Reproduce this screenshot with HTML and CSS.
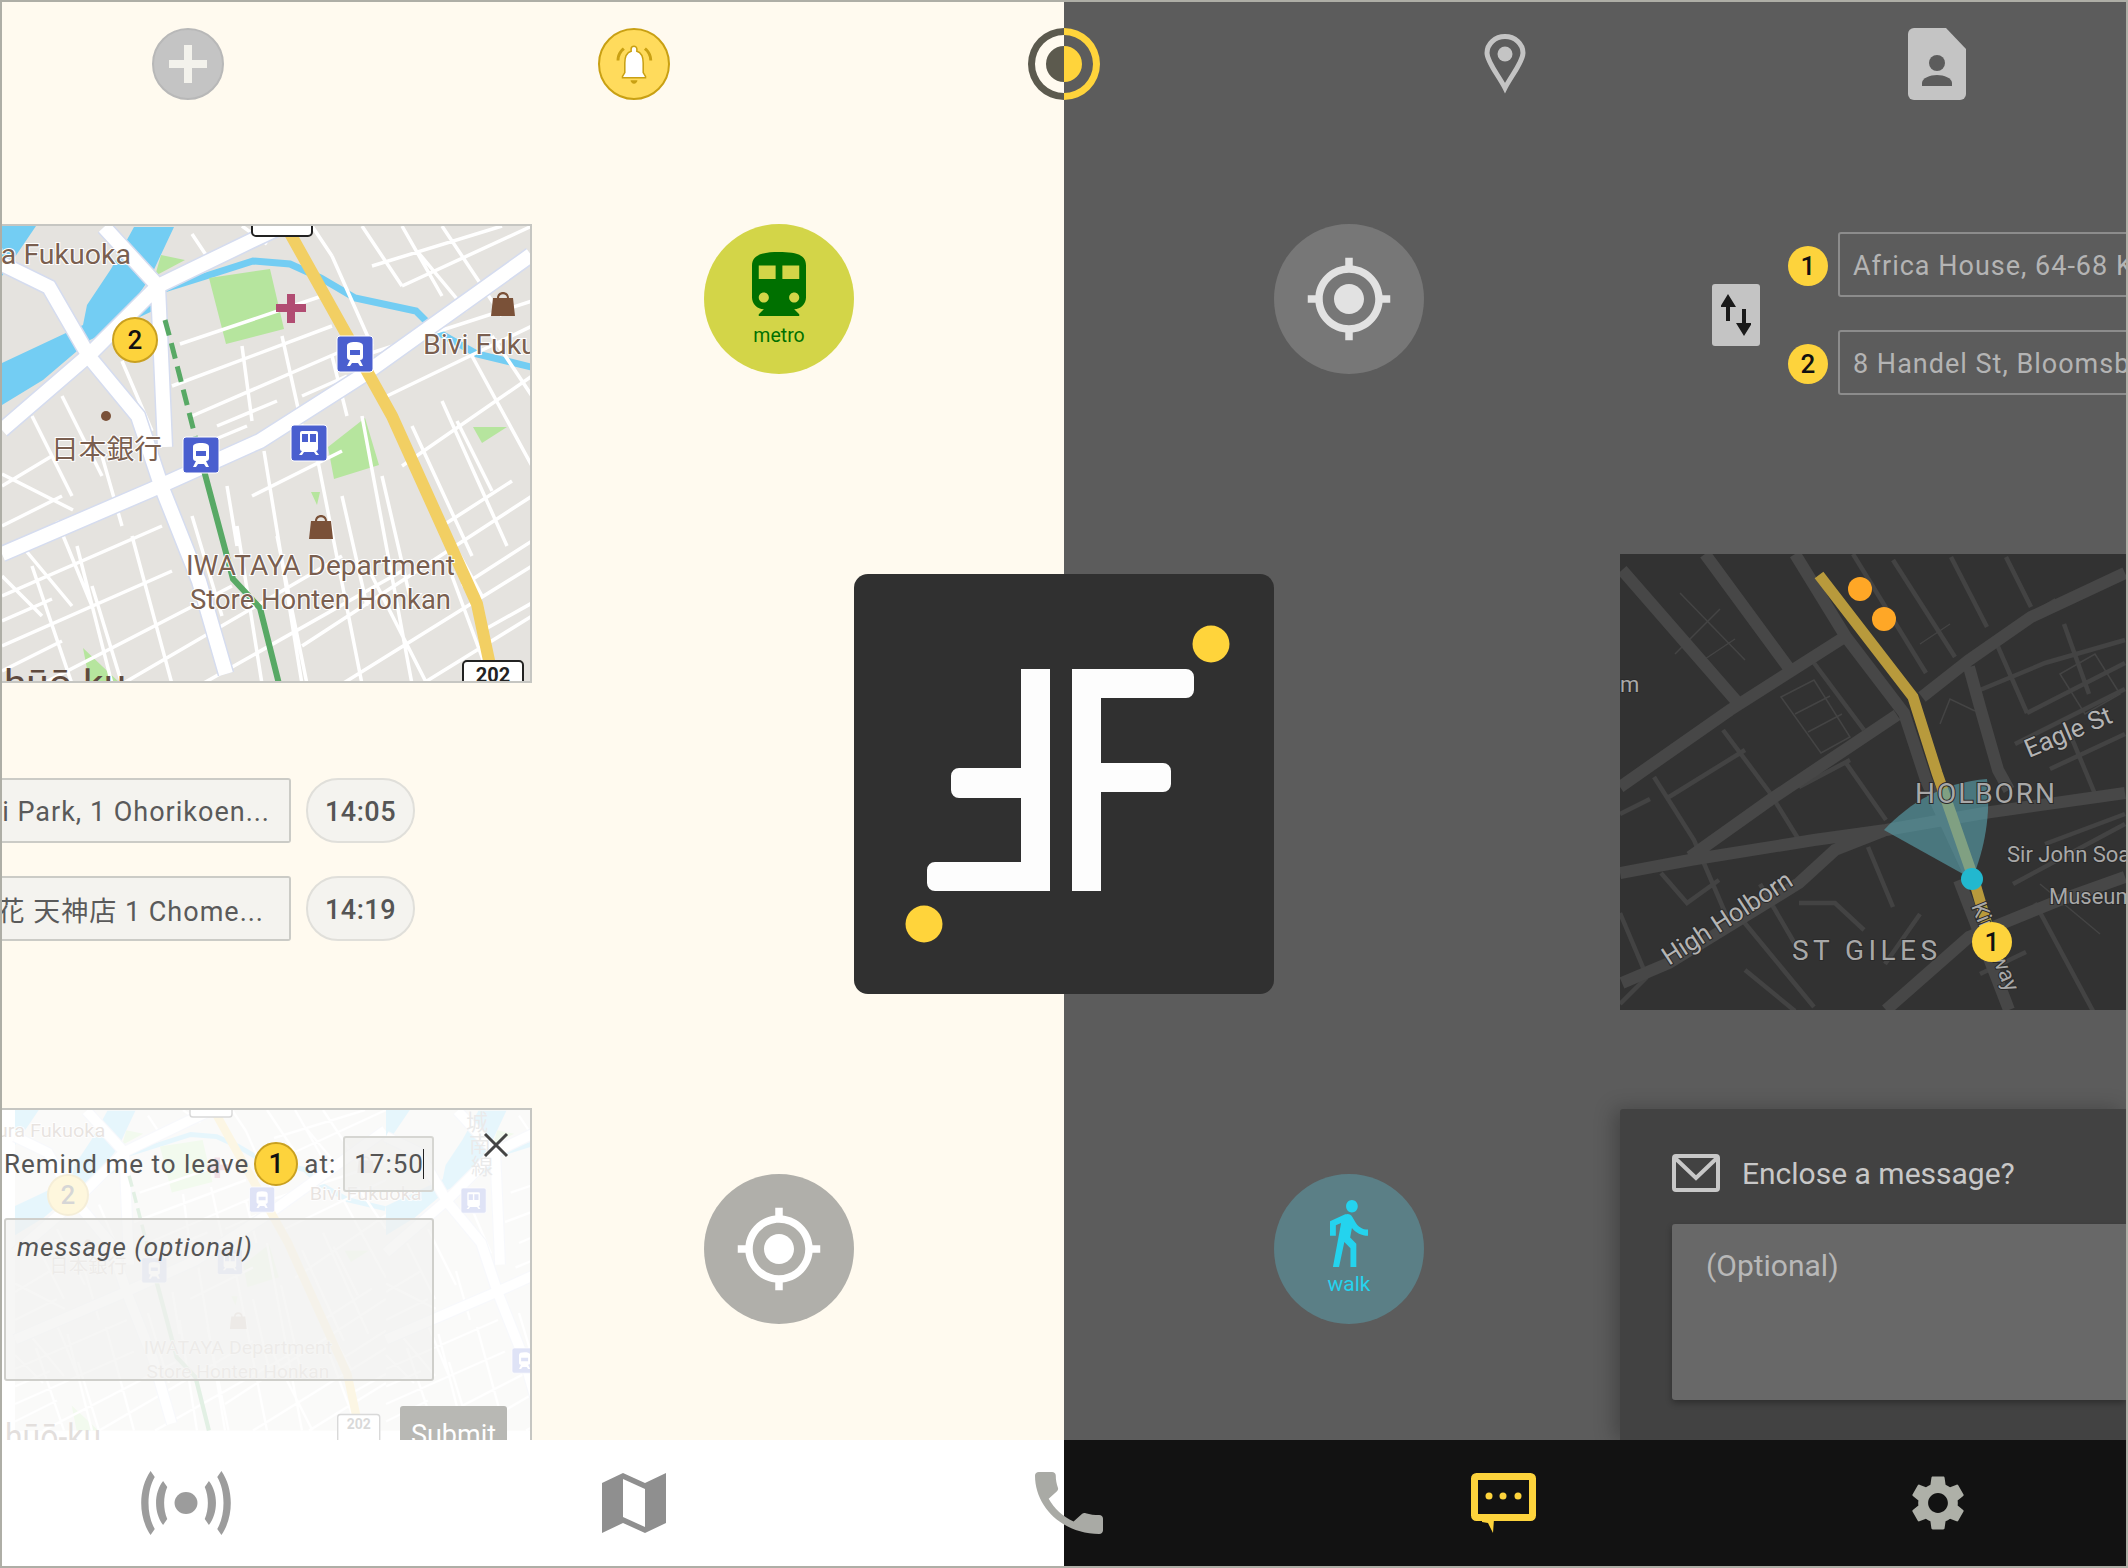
FILE: index.html
```html
<!DOCTYPE html>
<html lang="en">

<head>
  <meta charset="UTF-8">
  <meta name="viewport" content="width=device-width, initial-scale=1.0">
  <title>Route planner</title>
  <link rel="stylesheet" href="styles.css">
</head>

<body>
  <div class="app">

    <!-- top icons -->
    <div class="topbar">
      <div class="nav-plus">
        <svg class="plus-glyph" viewBox="0 0 38 38"><path d="M15 0h8v15h15v8H23v15h-8V23H0v-8h15z" /></svg>
      </div>
      <div class="nav-bell">
        <svg class="bell-glyph" viewBox="0 0 24 24">
          <path class="bell-arc" d="M7.2 4.6 6.2 3.4C4 5 2.9 7.6 2.9 10.2h1.5c0-2.3 1-4.3 2.8-5.6zM20 10.2h1.5c0-2.6-1.200-5.200-3.300-6.800l-1 1.200c1.800 1.300 2.800 3.300 2.800 5.600z" />
          <path class="bell-body" d="M16.800 11.500c0-3-1-5.400-3.300-6.100V4.200c0-.8-.7-1.500-1.500-1.500s-1.500.7-1.500 1.500v1.200c-2.300.7-3.300 3.100-3.300 6.100v5L6 18.500v.7h12v-.7l-1.200-2z" />
          <path class="bell-arc" d="M10.200 20.500h3.600c0 .8-.8 1.800-1.800 1.800s-1.800-1-1.800-1.800z" />
        </svg>
      </div>
      <svg class="nav-split" viewBox="0 0 72 72">
        <path class="split-a" d="M36 0a36 36 0 0 0 0 72v-7a29 29 0 0 1 0-58zM36 18a18 18 0 0 0 0 36z" />
        <path class="split-b" d="M36 0a36 36 0 0 1 0 72v-7a29 29 0 0 0 0-58zM36 18a18 18 0 0 1 0 36z" />
      </svg>
      <svg class="nav-pin" viewBox="0 0 42 60">
        <path class="pin-line" d="M21 54C15 42 3 28 3 19a18 16.500 0 0 1 36 0c0 9-12 23-18 35z" />
        <circle class="pin-dot" cx="21" cy="20" r="7.500" />
      </svg>
      <svg class="nav-doc" viewBox="0 0 58 72">
        <path class="doc-sheet" d="M6 0h32l20 21v45a6 6 0 0 1-6 6H6a6 6 0 0 1-6-6V6a6 6 0 0 1 6-6z" />
        <circle class="doc-person" cx="29" cy="35" r="8" />
        <path class="doc-person" d="M14 58v-3c0-5 8-8 15-8s15 3 15 8v3z" />
      </svg>
    </div>

    <div class="stage">

      <div class="col-left">
        <div class="map-frame">
          <svg class="fk-map" viewBox="0 0 530 458">
            <g id="fk-base">
              <rect width="530" height="458" fill="#e5e3df" />
              <path class="water" d="M132 1h40l-24 51-16 23 21-2 2 10-67 31-47 40-41 25v-42l81-38 4-20 24-36zM0 0h34L0 50z" />
              <path class="canal" d="M156 65l48-15 47-15 37 3 31 14 34 20 61 13 20 20 41 23 54 13" />
              <path class="park" d="M207 52l61-9 14 60-58 15zM159 29l24 5-30 16zM363 192l14 47-45 14-6-32zM471 201h34l-25 16zM81 422l38 36H88zM309 266h9l-3 13z" />
              <path class="streets" d="M75 320l35 138M130 310l40 148M262 225l38 233M310 205l50 253M360 190l50 268M410 200l60 130M440 175l65 145M470 130l60 110M0 370l160-70M0 420l170-75M40 458l190-98M120 458l220-128M200 458l200-113M300 420l230-150M340 458l190-118M420 458l110-68M400 240l130-90M385 170l145-70M178 118l142-48M190 190l150-65M170 160l160-60M330 30l40 90M360 0l40 60M400 0l40 70M440 0l60 90M370 40L500 0M400 60L530 0M330 130l15 60M240 120l10 75M280 110l20 90M360 130l170-55M0 260l50-30M30 190l40 80M60 170l40 80M0 300l60-30M100 230l20 70M0 248l71 36M20 320l50 60M0 350l40 40M225 260l10 60M190 290l30 100M420 260l60 110M90 360l30 98M450 350l40 108M30 340l40 118M55 295l35 85M0 395l50-22M0 445l60-30M235 300l25 158M275 310l30 148M340 270l25 110M380 250l30 130M440 300l70-45M460 360l70-45M480 405l50-28M215 200l60-25M300 170l45-20M185 225l60-25M250 270l90-45M365 340l60 118M490 110l40 60M415 25l50 60M310 0l20 30M120 135l30 70M455 195l35 70M240 0l25 18M190 8l20 30" />
              <g class="roads-edge">
                <path d="M0 328l149-64 109-49 102-65L529 29M0 38l47 23 41 71 48 58 24 72 37 93 27 93M0 204l88-76 68-68 95-46 30-14M102 1l54 59 7 161" />
              </g>
              <g class="roads">
                <path d="M0 328l149-64 109-49 102-65L529 29M0 38l47 23 41 71 48 58 24 72 37 93 27 93M0 204l88-76 68-68 95-46 30-14M102 1l54 59 7 161" />
              </g>
              <path class="highway" d="M284 0l106 190 85 188 17 80" />
            </g>
            <g id="fk-pois">
              <path class="rail-dash" d="M163 94l6 22 31 121" />
              <path class="rail" d="M200 237l31 116 27 29 19 76" />
              <rect class="shield" x="250" y="-12" width="60" height="22" rx="4" />
              <rect class="shield" x="461" y="435" width="60" height="40" rx="4" />
              <text class="shield-text" x="491" y="456" text-anchor="middle">202</text>
              <g class="transit" transform="translate(335 110)">
                <rect width="36" height="36" rx="3" />
                <path d="M18 6c-5 0-8 1-8 4v11c0 2 1 3 3 3l-3 6h3l2-3h6l2 3h3l-3-6c2 0 3-1 3-3V10c0-3-3-4-8-4zm-5 8h10v5H13z" />
              </g>
              <g class="transit" transform="translate(289 199)">
                <rect width="36" height="36" rx="3" />
                <path d="M11 6h14a2 2 0 0 1 2 2v16a2 2 0 0 1-2 2l3 4h-3l-2-3h-10l-2 3H8l3-4a2 2 0 0 1-2-2V8a2 2 0 0 1 2-2zm0 3v8h6V9zm8 0v8h6V9z" />
              </g>
              <g class="transit" transform="translate(181 211)">
                <rect width="36" height="36" rx="3" />
                <path d="M18 6c-5 0-8 1-8 4v11c0 2 1 3 3 3l-3 6h3l2-3h6l2 3h3l-3-6c2 0 3-1 3-3V10c0-3-3-4-8-4zm-5 8h10v5H13z" />
              </g>
              <path class="bag" d="M491 72h20l2 18h-24zM495 72c0-8 12-8 12 0h-2c0-5-8-5-8 0z" />
              <path class="bag" d="M309 295h20l2 18h-24zM313 295c0-8 12-8 12 0h-2c0-5-8-5-8 0z" />
              <path class="clinic" d="M285 68h8v10h11v8h-11v11h-8V86h-11v-8h11z" />
              <circle class="poi-dot" cx="104" cy="190" r="5" />
              <text class="map-label" x="-26" y="38" textLength="155" lengthAdjust="spacingAndGlyphs">ura Fukuoka</text>
              <text class="map-label" x="421" y="128" textLength="160" lengthAdjust="spacingAndGlyphs">Bivi Fukuoka</text>
              <text class="map-label map-cjk" x="49" y="233" textLength="111" lengthAdjust="spacingAndGlyphs">日本銀行</text>
              <text class="map-label" x="184" y="349" textLength="269" lengthAdjust="spacingAndGlyphs">IWATAYA Department</text>
              <text class="map-label" x="188" y="383" textLength="261" lengthAdjust="spacingAndGlyphs">Store Honten Honkan</text>
            </g>
            <text class="map-ward" x="2" y="470" textLength="122" lengthAdjust="spacingAndGlyphs">hūō-ku</text>
            <circle class="pin-mark" cx="133" cy="114" r="22" />
            <text class="pin-num" x="133" y="123" text-anchor="middle">2</text>
          </svg>
        </div>

        <div class="stop-rows">
          <div class="stop-row">
            <div class="stop-field">i Park, 1 Ohorikoen...</div>
            <div class="stop-time">14:05</div>
          </div>
          <div class="stop-row">
            <div class="stop-field">花 天神店 1 Chome...</div>
            <div class="stop-time">14:19</div>
          </div>
        </div>

        <div class="remind-panel">
          <svg class="remind-map" viewBox="0 0 530 332">
            <use href="#fk-base" transform="translate(13 0) scale(.7)" />
            <use href="#fk-base" transform="translate(384 0) scale(.7)" />
            <use href="#fk-pois" transform="translate(13 0) scale(.7)" />
            <circle class="pin-mark" cx="66" cy="85" r="20" />
            <text class="pin-num" x="66" y="94" text-anchor="middle">2</text>
            <text class="map-ward" x="3" y="340" textLength="96" lengthAdjust="spacingAndGlyphs">hūō-ku</text>
            <text class="map-cjk map-vertical" x="475" y="20" text-anchor="middle">城</text>
            <text class="map-cjk map-vertical" x="478" y="42" text-anchor="middle">南</text>
            <text class="map-cjk map-vertical" x="480" y="64" text-anchor="middle">線</text>
            <g class="transit" transform="translate(459 78) scale(.7)">
              <rect width="36" height="36" rx="3" />
              <path d="M11 6h14a2 2 0 0 1 2 2v16a2 2 0 0 1-2 2l3 4h-3l-2-3h-10l-2 3H8l3-4a2 2 0 0 1-2-2V8a2 2 0 0 1 2-2zm0 3v8h6V9zm8 0v8h6V9z" />
            </g>
            <g class="transit" transform="translate(510 238) scale(.7)">
              <rect width="36" height="36" rx="3" />
              <path d="M18 6c-5 0-8 1-8 4v11c0 2 1 3 3 3l-3 6h3l2-3h6l2 3h3l-3-6c2 0 3-1 3-3V10c0-3-3-4-8-4zm-5 8h10v5H13z" />
            </g>
          </svg>
          <div class="remind-head">
            <span class="remind-text">Remind me to leave</span>
            <span class="badge-one">1</span>
            <span class="remind-text">at:</span>
            <div class="time-field">17:50<span class="caret"></span></div>
            <svg class="close-x" viewBox="0 0 26 26"><path d="M2 2l22 22M24 2L2 24" /></svg>
          </div>
          <div class="remind-note">message (optional)</div>
          <div class="remind-foot">
            <div class="submit-btn">Submit</div>
          </div>
        </div>
      </div>

      <div class="col-btn col-btn-light">
        <div class="round-btn metro-btn">
          <svg class="metro-glyph" viewBox="4 2 16 19" preserveAspectRatio="none">
            <path d="M12 2c-4 0-8 .5-8 4v9.500C4 17.430 5.570 19 7.500 19L6 20.500v.5h12v-.5L16.500 19c1.930 0 3.500-1.570 3.500-3.500V6c0-3.500-3.580-4-8-4zM7.500 17c-.83 0-1.500-.67-1.500-1.500S6.670 14 7.500 14s1.500.67 1.500 1.500S8.330 17 7.500 17zm3.500-7H6V6h5v4zm2 0V6h5v4h-5zm3.500 7c-.83 0-1.500-.67-1.500-1.500s.67-1.500 1.500-1.500 1.500.67 1.500 1.500-.67 1.500-1.500 1.500z" />
          </svg>
          <span class="mode-label">metro</span>
        </div>
        <div class="round-btn locate-light">
          <svg class="locate-glyph" viewBox="0 0 24 24">
            <path d="M12 8c-2.210 0-4 1.790-4 4s1.790 4 4 4 4-1.790 4-4-1.790-4-4-4zm8.940 3c-.46-4.170-3.770-7.480-7.940-7.940V1h-2v2.060C6.830 3.520 3.520 6.830 3.060 11H1v2h2.060c.46 4.170 3.770 7.480 7.940 7.940V23h2v-2.060c4.170-.46 7.480-3.770 7.940-7.940H23v-2h-2.060zM12 19c-3.870 0-7-3.130-7-7s3.130-7 7-7 7 3.130 7 7-3.130 7-7 7z" />
          </svg>
        </div>
      </div>

      <div class="col-btn col-btn-dark">
        <div class="round-btn locate-dark">
          <svg class="locate-glyph" viewBox="0 0 24 24">
            <path d="M12 8c-2.210 0-4 1.790-4 4s1.790 4 4 4 4-1.790 4-4-1.790-4-4-4zm8.940 3c-.46-4.170-3.770-7.480-7.940-7.940V1h-2v2.060C6.830 3.520 3.520 6.830 3.060 11H1v2h2.060c.46 4.170 3.770 7.480 7.940 7.940V23h2v-2.060c4.170-.46 7.480-3.770 7.940-7.940H23v-2h-2.060zM12 19c-3.870 0-7-3.130-7-7s3.130-7 7-7 7 3.130 7 7-3.130 7-7 7z" />
          </svg>
        </div>
        <div class="round-btn walk-btn">
          <svg class="walk-glyph" viewBox="6 1.500 13 21.500" preserveAspectRatio="none">
            <path d="M13.500 5.500c1.100 0 2-.9 2-2s-.9-2-2-2-2 .9-2 2 .9 2 2 2zM9.800 8.900L7 23h2.100l1.800-8 2.100 2v6h2v-7.500l-2.100-2 .6-3C14.800 12 16.800 13 19 13v-2c-1.900 0-3.500-1-4.300-2.400l-1-1.600c-.4-.6-1-1-1.700-1-.3 0-.5.1-.8.1L6 8.300V13h2V9.600l1.800-.7" />
          </svg>
          <span class="mode-label">walk</span>
        </div>
      </div>

      <div class="col-right">
        <div class="route-form">
          <div class="swap-btn">
            <svg class="swap-glyph" viewBox="0 0 30 42">
              <path d="M6 0l8 13h-6v14H4V13h-6zM22 42l-8-13h6V15h4v14h6z" transform="translate(1 0)" />
            </svg>
          </div>
          <div class="route-rows">
            <div class="route-row"><span class="badge-two">1</span><div class="route-field">Africa House, 64-68 Kingsway</div></div>
            <div class="route-row"><span class="badge-two">2</span><div class="route-field">8 Handel St, Bloomsbury</div></div>
          </div>
        </div>

        <svg class="ldn-map" viewBox="0 0 506 456">
          <rect width="506" height="456" fill="#323232" />
          <path class="ldn-fine" d="M161 143l33-17 36 57-29 16zM175 160l35-18M188 178l34-18M60 39l65 67M100 55l-45 45M115 85l-30 20M320 170l10-25 25 12M440 120l35-20 25 40-35 20zM410 60l25-15M300 90l30-20M250 120l30 40M480 380l-60-50" />
          <path class="ldn-minor" d="M34 223l40 63 33 77M103 176l47 63 29 47M194 109l50 67M226 209l40 57M49 243l76-47M375 86l32 73M360 136l65-27 80-23M273 6l62 97M233 0l73 119M331 3l36 70M386 3l25 50M415 349l58 108M248 293l25 60M179 233l51-27M179 349h36l29 27M0 359l27 64M27 423L0 450M41 319l26 30 32-23M125 416l50 41M114 356l80 97M444 70l25 70M407 159l98-50M395 190l110-55M430 215l75-35M425 290l80-30M393 330l112-60M360 420l46-22M300 360l-35 50M140 330l35 60M450 180l25 60M0 260l30-15" />
          <path class="ldn-road" d="M175 0l51 83 58 76 22 67 43 93M302 143l47-37 62-43 94-44M0 233l110-77 113-72M0 319l70-13 124-20 72-10 98-17 141-20M70 303l80-57 127-85M2 429l47-20 130-80 36-33 51-20M349 113l11 40 18 63 11 20M2 16l116 133M85 0l83 113M266 456l83-73 91-37 65-23M339 326l50 130" />
          <path class="ldn-route" d="M199 21l94 122 24 76 36 104 19 65" />
          <circle class="ldn-stop" cx="240" cy="35" r="12" />
          <circle class="ldn-stop" cx="264" cy="65" r="12" />
          <path class="ldn-fov" d="M352 325L264 276C290 248 325 228 367 225c4 34 -2 70 -15 100z" />
          <circle class="ldn-here" cx="352" cy="325" r="11" />
          <text class="ldn-label ldn-area" x="295" y="249" textLength="140" lengthAdjust="spacing">HOLBORN</text>
          <text class="ldn-label ldn-area" x="172" y="406" textLength="145" lengthAdjust="spacing">ST GILES</text>
          <text class="ldn-label" x="0" y="138">m</text>
          <text class="ldn-label" x="387" y="308">Sir John Soane's</text>
          <text class="ldn-label" x="429" y="350">Museum</text>
          <text class="ldn-label ldn-street" transform="translate(49 412) rotate(-33)">High Holborn</text>
          <text class="ldn-label ldn-street" transform="translate(409 204) rotate(-23)">Eagle St</text>
          <text class="ldn-label" transform="translate(351 352) rotate(68)">Kingsway</text>
          <circle class="ldn-mark" cx="372" cy="388" r="20" />
          <text class="ldn-num" x="372" y="397" text-anchor="middle">1</text>
        </svg>

        <div class="message-panel">
          <div class="message-head">
            <svg class="envelope" viewBox="0 0 48 38">
              <rect x="2" y="2" width="44" height="34" rx="2" />
              <path d="M3 4l21 20L45 4" />
            </svg>
            <span>Enclose a message?</span>
          </div>
          <div class="message-box">(Optional)</div>
        </div>
      </div>
    </div>

    <!-- bottom icons -->
    <div class="bottombar">
      <svg class="tab-signal" viewBox="0 0 96 64" preserveAspectRatio="none">
        <ellipse cx="48" cy="32" rx="11" ry="11" />
        <path d="M14 0l4 6C10 20 10 44 18 58l-4 6C2 46 2 18 14 0zM26 10l4 6c-4 10-4 22 0 32l-4 6C17 42 17 22 26 10z" />
        <path d="M82 0l-4 6c8 14 8 38 0 52l4 6C94 46 94 18 82 0zM70 10l-4 6c4 10 4 22 0 32l4 6C79 42 79 22 70 10z" />
      </svg>
      <svg class="tab-map" viewBox="0 0 64 60">
        <path class="fold-outer" d="M0 10L21 0l22 10L64 0v50L43 60 21 50 0 60z" />
        <path class="fold-inner" d="M21 6l22 10v38L21 44z" />
      </svg>
      <svg class="tab-phone" viewBox="3 3 18 18" preserveAspectRatio="none">
        <path d="M6.620 10.790c1.440 2.830 3.760 5.140 6.590 6.590l2.200-2.200c.27-.27.67-.36 1.020-.24 1.120.37 2.330.57 3.570.57.55 0 1 .45 1 1V20c0 .55-.45 1-1 1-9.390 0-17-7.610-17-17 0-.55.45-1 1-1h3.500c.55 0 1 .45 1 1 0 1.250.2 2.450.57 3.570.11.35.03.74-.25 1.020l-2.200 2.200z" />
      </svg>
      <svg class="tab-chat" viewBox="0 0 65 60">
        <path d="M11 46h12l-1 14-5-10-6-1z" />
        <rect class="chat-box" x="3.500" y="3.500" width="58" height="41" rx="2" />
        <circle cx="18" cy="23" r="3.500" />
        <circle cx="32" cy="23" r="3.500" />
        <circle cx="47" cy="23" r="3.500" />
      </svg>
      <svg class="tab-gear" viewBox="0 0 24 24">
        <path d="M19.140 12.940c.04-.3.060-.61.060-.94 0-.32-.02-.64-.07-.94l2.030-1.580c.18-.14.23-.41.12-.61l-1.920-3.320c-.12-.22-.37-.29-.59-.22l-2.390.96c-.5-.38-1.030-.7-1.620-.94l-.36-2.540c-.04-.24-.24-.41-.48-.41h-3.840c-.24 0-.43.17-.47.41l-.36 2.540c-.59.24-1.130.57-1.620.94l-2.390-.96c-.22-.08-.47 0-.59.22L2.740 8.870c-.12.21-.08.47.12.61l2.030 1.580c-.05.3-.09.63-.09.94s.02.64.07.94l-2.030 1.580c-.18.14-.23.41-.12.61l1.920 3.320c.12.22.37.29.59.22l2.390-.96c.5.38 1.030.7 1.620.94l.36 2.540c.05.24.24.41.48.41h3.840c.24 0 .44-.17.47-.41l.36-2.540c.59-.24 1.130-.56 1.620-.94l2.390.96c.22.08.47 0 .59-.22l1.920-3.320c.12-.22.07-.47-.12-.61l-2.010-1.580zM12 15.600c-1.980 0-3.600-1.620-3.600-3.600s1.620-3.600 3.600-3.600 3.600 1.620 3.600 3.600-1.620 3.600-3.600 3.600z" />
      </svg>
    </div>

    <!-- logo sits over both halves -->
    <svg class="logo" viewBox="0 0 420 420">
      <rect width="420" height="420" rx="14" fill="#303030" />
      <path class="logo-mark" d="M218 95H332a8 8 0 0 1 8 8v13a8 8 0 0 1-8 8H247V189H309a8 8 0 0 1 8 8v13a8 8 0 0 1-8 8H247V317H218Z" />
      <path class="logo-mark" d="M196 95V317H81a8 8 0 0 1-8-8V296a8 8 0 0 1 8-8H167V224H105a8 8 0 0 1-8-8V202a8 8 0 0 1 8-8H167V95Z" />
      <circle class="logo-dot" cx="357" cy="70" r="18.500" />
      <circle class="logo-dot" cx="70" cy="350" r="18.500" />
    </svg>
  </div>
</body>

</html>
```

FILE: styles.css
```css
* {
  box-sizing: border-box;
}

body {
  margin: 0;
  font-family: "Roboto", "Noto Sans CJK JP", sans-serif;
  background-color: #5c5c5c;
}

.app {
  position: relative;
  display: flex;
  flex-direction: column;
  width: 2128px;
  height: 1568px;
  overflow: hidden;
  border: 2px solid #aeaea6;
  background: linear-gradient(to right, #fffaef 1062px, #5c5c5c 1062px);
}

/* top icons */
.topbar {
  display: grid;
  grid-template-columns: 372px 520px 340px 542px 322px;
  justify-items: center;
  align-items: center;
  flex: none;
  height: 72px;
  margin-top: 26px;
}

.nav-plus,
.nav-bell {
  display: flex;
  align-items: center;
  justify-content: center;
  width: 72px;
  height: 72px;
  border-radius: 50%;
}

.nav-plus {
  background-color: #c4c4c4;
  border: 2px solid #b8b8b8;
}

.plus-glyph {
  width: 38px;
  height: 38px;
  fill: #f3f2ec;
}

.nav-bell {
  background-color: #ffdb5c;
  border: 2px solid #c9a013;
}

.bell-glyph {
  width: 46px;
  height: 46px;
}

.bell-arc {
  fill: #c9a013;
}

.bell-body {
  fill: #fff;
  stroke: #c9a013;
  stroke-width: .8;
}

.nav-split {
  width: 72px;
  height: 72px;
}

.split-a {
  fill: #5c5a4e;
}

.split-b {
  fill: #ffd43b;
}

.nav-pin {
  width: 42px;
  height: 60px;
}

.pin-line {
  fill: none;
  stroke: #c4c4c4;
  stroke-width: 5;
}

.pin-dot {
  fill: #c4c4c4;
}

.nav-doc {
  width: 58px;
  height: 72px;
}

.doc-sheet {
  fill: #c4c4c4;
}

.doc-person {
  fill: #5c5c5c;
}

/* the four columns between the icon bars */
.stage {
  display: flex;
  flex: 1;
  min-height: 0;
  margin-top: 124px;
}

.col-left {
  display: flex;
  flex-direction: column;
  flex: none;
  width: 530px;
}

.col-btn {
  display: flex;
  flex-direction: column;
  justify-content: space-between;
  flex: none;
  width: 150px;
  padding-bottom: 116px;
}

.col-btn-light {
  margin-left: 172px;
}

.col-btn-dark {
  margin-left: 420px;
}

.col-right {
  display: flex;
  flex-direction: column;
  flex: 1;
  min-width: 0;
  margin-left: 196px;
}

.round-btn {
  display: flex;
  flex-direction: column;
  align-items: center;
  justify-content: center;
  width: 150px;
  height: 150px;
  border-radius: 50%;
}

.metro-btn {
  background-color: #d3d548;
  color: #007000;
}

.metro-glyph {
  width: 54px;
  height: 64px;
  fill: #007000;
}

.mode-label {
  margin-top: 10px;
  font-size: 19.500px;
  line-height: 20px;
}

.locate-glyph {
  width: 90px;
  height: 90px;
}

.locate-light {
  background-color: #b0afaa;
}

.locate-light .locate-glyph {
  fill: #fff;
}

.locate-dark {
  background-color: #777;
}

.locate-dark .locate-glyph {
  fill: #e2e2e2;
}

.walk-btn {
  padding-bottom: 5px;
  background-color: #5b7f86;
  color: #24d3ee;
}

.walk-glyph {
  width: 38px;
  height: 67px;
  fill: #24d3ee;
}

.walk-btn .mode-label {
  margin-top: 7px;
  font-size: 21px;
}

/* left column */
.map-frame {
  flex: none;
  width: 530px;
  height: 459px;
  overflow: hidden;
  border: 2px solid #c6c6c2;
  border-left: none;
}

.fk-map {
  display: block;
  width: 530px;
  height: 458px;
}

.water {
  fill: #73cdf3;
}

.canal {
  fill: none;
  stroke: #73cdf3;
  stroke-width: 7;
}

.park {
  fill: #b6e59e;
}

.streets {
  fill: none;
  stroke: #fff;
  stroke-width: 3.500;
}

.roads-edge path {
  fill: none;
  stroke: #d5dcef;
  stroke-width: 17;
}

.roads path {
  fill: none;
  stroke: #fff;
  stroke-width: 14;
}

.highway {
  fill: none;
  stroke: #f2cf63;
  stroke-width: 12;
}

.rail {
  fill: none;
  stroke: #58a965;
  stroke-width: 6;
}

.rail-dash {
  fill: none;
  stroke: #58a965;
  stroke-width: 5;
  stroke-dasharray: 16 8;
}

.shield {
  fill: #fff;
  stroke: #222;
  stroke-width: 2;
}

.shield-text {
  font-size: 20px;
  font-weight: 700;
  fill: #222;
}

.transit rect {
  fill: #4a5fcf;
  stroke: #fff;
  stroke-width: 1;
}

.transit path {
  fill: #fff;
  fill-rule: evenodd;
}

.bag {
  fill: #7a5138;
}

.clinic {
  fill: #b14c72;
}

.poi-dot {
  fill: #7a5138;
}

.map-label {
  font-size: 27px;
  fill: #7a5f50;
  stroke: #fff;
  stroke-width: 2px;
  paint-order: stroke;
}

.map-cjk {
  font-family: "Noto Sans CJK JP", sans-serif;
}

.map-ward {
  font-size: 36px;
  fill: #5f4a3e;
}

.map-vertical {
  font-size: 22px;
  fill: #888;
}

.pin-mark {
  fill: #fdd33c;
  stroke: #c9a020;
  stroke-width: 2;
}

.pin-num {
  font-size: 26px;
  font-weight: 500;
  fill: #111;
}

.stop-rows {
  display: flex;
  flex-direction: column;
  gap: 33px;
  margin-top: 95px;
}

.stop-row {
  display: flex;
  gap: 15px;
}

.stop-field {
  display: flex;
  align-items: center;
  justify-content: flex-end;
  width: 289px;
  height: 65px;
  padding-top: 2px;
  padding-right: 19px;
  overflow: hidden;
  white-space: nowrap;
  border: 2px solid #cbcbc6;
  border-left: none;
  border-radius: 0 3px 3px 0;
  background-color: #f4f3ef;
  color: #5a5a5a;
  font-size: 27px;
  letter-spacing: 1px;
}

.stop-row:last-child .stop-field {
  padding-right: 25px;
}

.stop-time {
  display: flex;
  align-items: center;
  justify-content: center;
  width: 109px;
  height: 65px;
  padding-top: 2px;
  border: 2px solid #e0dfda;
  border-radius: 32px;
  background-color: #f4f3ef;
  color: #555;
  font-size: 27px;
  font-weight: 500;
  letter-spacing: .5px;
}

.remind-panel {
  position: relative;
  flex: 1;
  min-height: 0;
  margin-top: 167px;
  padding: 26px 0 0 2px;
  overflow: hidden;
  border-top: 2px solid #c6c6c2;
  border-right: 2px solid #c6c6c2;
  background-color: #fff;
}

.remind-map {
  position: absolute;
  left: 0;
  top: 0;
  width: 530px;
  height: 332px;
  opacity: .17;
}

.remind-head {
  position: relative;
  display: flex;
  align-items: center;
  height: 56px;
}

.remind-text {
  color: #555;
  font-size: 26px;
  letter-spacing: 1px;
}

.badge-one {
  display: flex;
  align-items: center;
  justify-content: center;
  flex: none;
  width: 44px;
  height: 44px;
  margin: 0 6px 0 5px;
  border: 2px solid #c9a020;
  border-radius: 50%;
  background-color: #fdd33c;
  color: #111;
  font-size: 27px;
  font-weight: 500;
}

.time-field {
  display: flex;
  align-items: center;
  width: 91px;
  height: 56px;
  margin-left: 7px;
  padding-left: 9px;
  border: 2px solid #d6d6d2;
  border-radius: 3px;
  background-color: rgba(240, 240, 238, .7);
  color: #555;
  font-size: 26px;
  letter-spacing: 1px;
}

.caret {
  width: 1.500px;
  height: 30px;
  margin-left: -1px;
  background-color: #222;
}

.close-x {
  position: absolute;
  left: 479px;
  top: -4px;
  width: 26px;
  height: 26px;
  fill: none;
  stroke: #444;
  stroke-width: 3;
}

.remind-note {
  position: relative;
  width: 430px;
  height: 163px;
  margin-top: 26px;
  padding: 12px 11px;
  border: 2px solid #cfcfcb;
  border-radius: 3px;
  background-color: rgba(240, 240, 238, .6);
  color: #555;
  font-size: 26px;
  font-style: italic;
  letter-spacing: 1px;
}

.remind-foot {
  position: relative;
  display: flex;
  justify-content: flex-end;
  width: 503px;
  margin-top: 25px;
}

.submit-btn {
  width: 107px;
  height: 60px;
  padding-top: 13px;
  border-radius: 3px 3px 0 0;
  background-color: #b8b8b4;
  color: #fff;
  font-size: 27px;
  text-align: center;
}

/* right column */
.route-form {
  display: flex;
  align-items: center;
  flex: none;
  margin-top: 8px;
  margin-left: 92px;
  overflow: hidden;
}

.swap-btn {
  display: flex;
  align-items: center;
  justify-content: center;
  flex: none;
  width: 48px;
  height: 62px;
  margin-top: 2px;
  border-radius: 3px;
  background-color: #c4c4c4;
}

.swap-glyph {
  width: 30px;
  height: 42px;
  fill: #1a1a1a;
}

.route-rows {
  display: flex;
  flex-direction: column;
  gap: 33px;
  margin-left: 28px;
}

.route-row {
  display: flex;
  align-items: center;
  gap: 10px;
}

.badge-two {
  display: flex;
  align-items: center;
  justify-content: center;
  flex: none;
  width: 40px;
  height: 40px;
  margin-top: 2px;
  border-radius: 50%;
  background-color: #fdd33c;
  color: #111;
  font-size: 26px;
  font-weight: 500;
}

.route-field {
  width: 340px;
  height: 65px;
  padding-top: 2px;
  padding-left: 13px;
  overflow: hidden;
  white-space: nowrap;
  border: 2px solid #8c8c8c;
  border-radius: 3px;
  color: #b4b4b4;
  font-size: 27px;
  line-height: 61px;
  letter-spacing: 1px;
}

.ldn-map {
  display: block;
  flex: none;
  width: 506px;
  height: 456px;
  margin-top: 159px;
}

.ldn-road {
  fill: none;
  stroke: #474747;
  stroke-width: 12;
}

.ldn-minor {
  fill: none;
  stroke: #434343;
  stroke-width: 4.500;
}

.ldn-fine {
  fill: none;
  stroke: #444;
  stroke-width: 1.500;
}

.ldn-route {
  fill: none;
  stroke: #b89a3c;
  stroke-width: 11;
}

.ldn-stop {
  fill: #ffa726;
}

.ldn-fov {
  fill: #5aa5b0;
  opacity: .6;
}

.ldn-here {
  fill: #22b8cf;
}

.ldn-label {
  font-size: 22px;
  fill: #a8a8a8;
  stroke: #2a2a2a;
  stroke-width: 2px;
  paint-order: stroke;
}

.ldn-street {
  font-size: 25.500px;
  fill: #b4b4b4;
}

.ldn-area {
  font-size: 28px;
}

.ldn-mark {
  fill: #fdd33c;
}

.ldn-num {
  font-size: 26px;
  font-weight: 500;
  fill: #111;
}

.message-panel {
  flex: 1;
  min-height: 0;
  margin-top: 99px;
  padding: 45px 0 0 52px;
  border-radius: 3px 0 0 0;
  background-color: #424242;
  box-shadow: -6px 0 20px rgba(0, 0, 0, .25);
}

.message-head {
  display: flex;
  align-items: center;
  gap: 22px;
  color: #c8c8c8;
  font-size: 30px;
}

.envelope {
  width: 48px;
  height: 38px;
  fill: none;
  stroke: #c8c8c8;
  stroke-width: 4;
}

.message-box {
  height: 176px;
  margin-top: 32px;
  padding: 24px 34px;
  border-radius: 3px 0 0 3px;
  background-color: #686868;
  box-shadow: 0 3px 6px rgba(0, 0, 0, .3);
  color: #b8b8b8;
  font-size: 30px;
}

/* bottom icons */
.bottombar {
  position: relative;
  display: grid;
  grid-template-columns: 368px 528px 342px 526px 344px;
  justify-items: center;
  align-items: center;
  flex: none;
  height: 126px;
  background: linear-gradient(to right, #fff 1062px, #121212 1062px);
}

.tab-signal {
  width: 100px;
  height: 64px;
  fill: #9c9c9c;
}

.tab-map {
  width: 64px;
  height: 60px;
}

.fold-outer {
  fill: #8f8f8f;
}

.fold-inner {
  fill: #fff;
}

.tab-phone {
  width: 68px;
  height: 62px;
  fill: #a9aaa5;
}

.tab-chat {
  width: 65px;
  height: 60px;
  fill: #fdd33c;
}

.chat-box {
  fill: #121212;
  stroke: #fdd33c;
  stroke-width: 7;
}

.tab-gear {
  width: 66px;
  height: 66px;
  fill: #aeb0a8;
}

/* logo */
.logo {
  position: absolute;
  left: 852px;
  top: 572px;
  width: 420px;
  height: 420px;
}

.logo-mark {
  fill: #fdfdfd;
}

.logo-dot {
  fill: #ffd43b;
}
```
